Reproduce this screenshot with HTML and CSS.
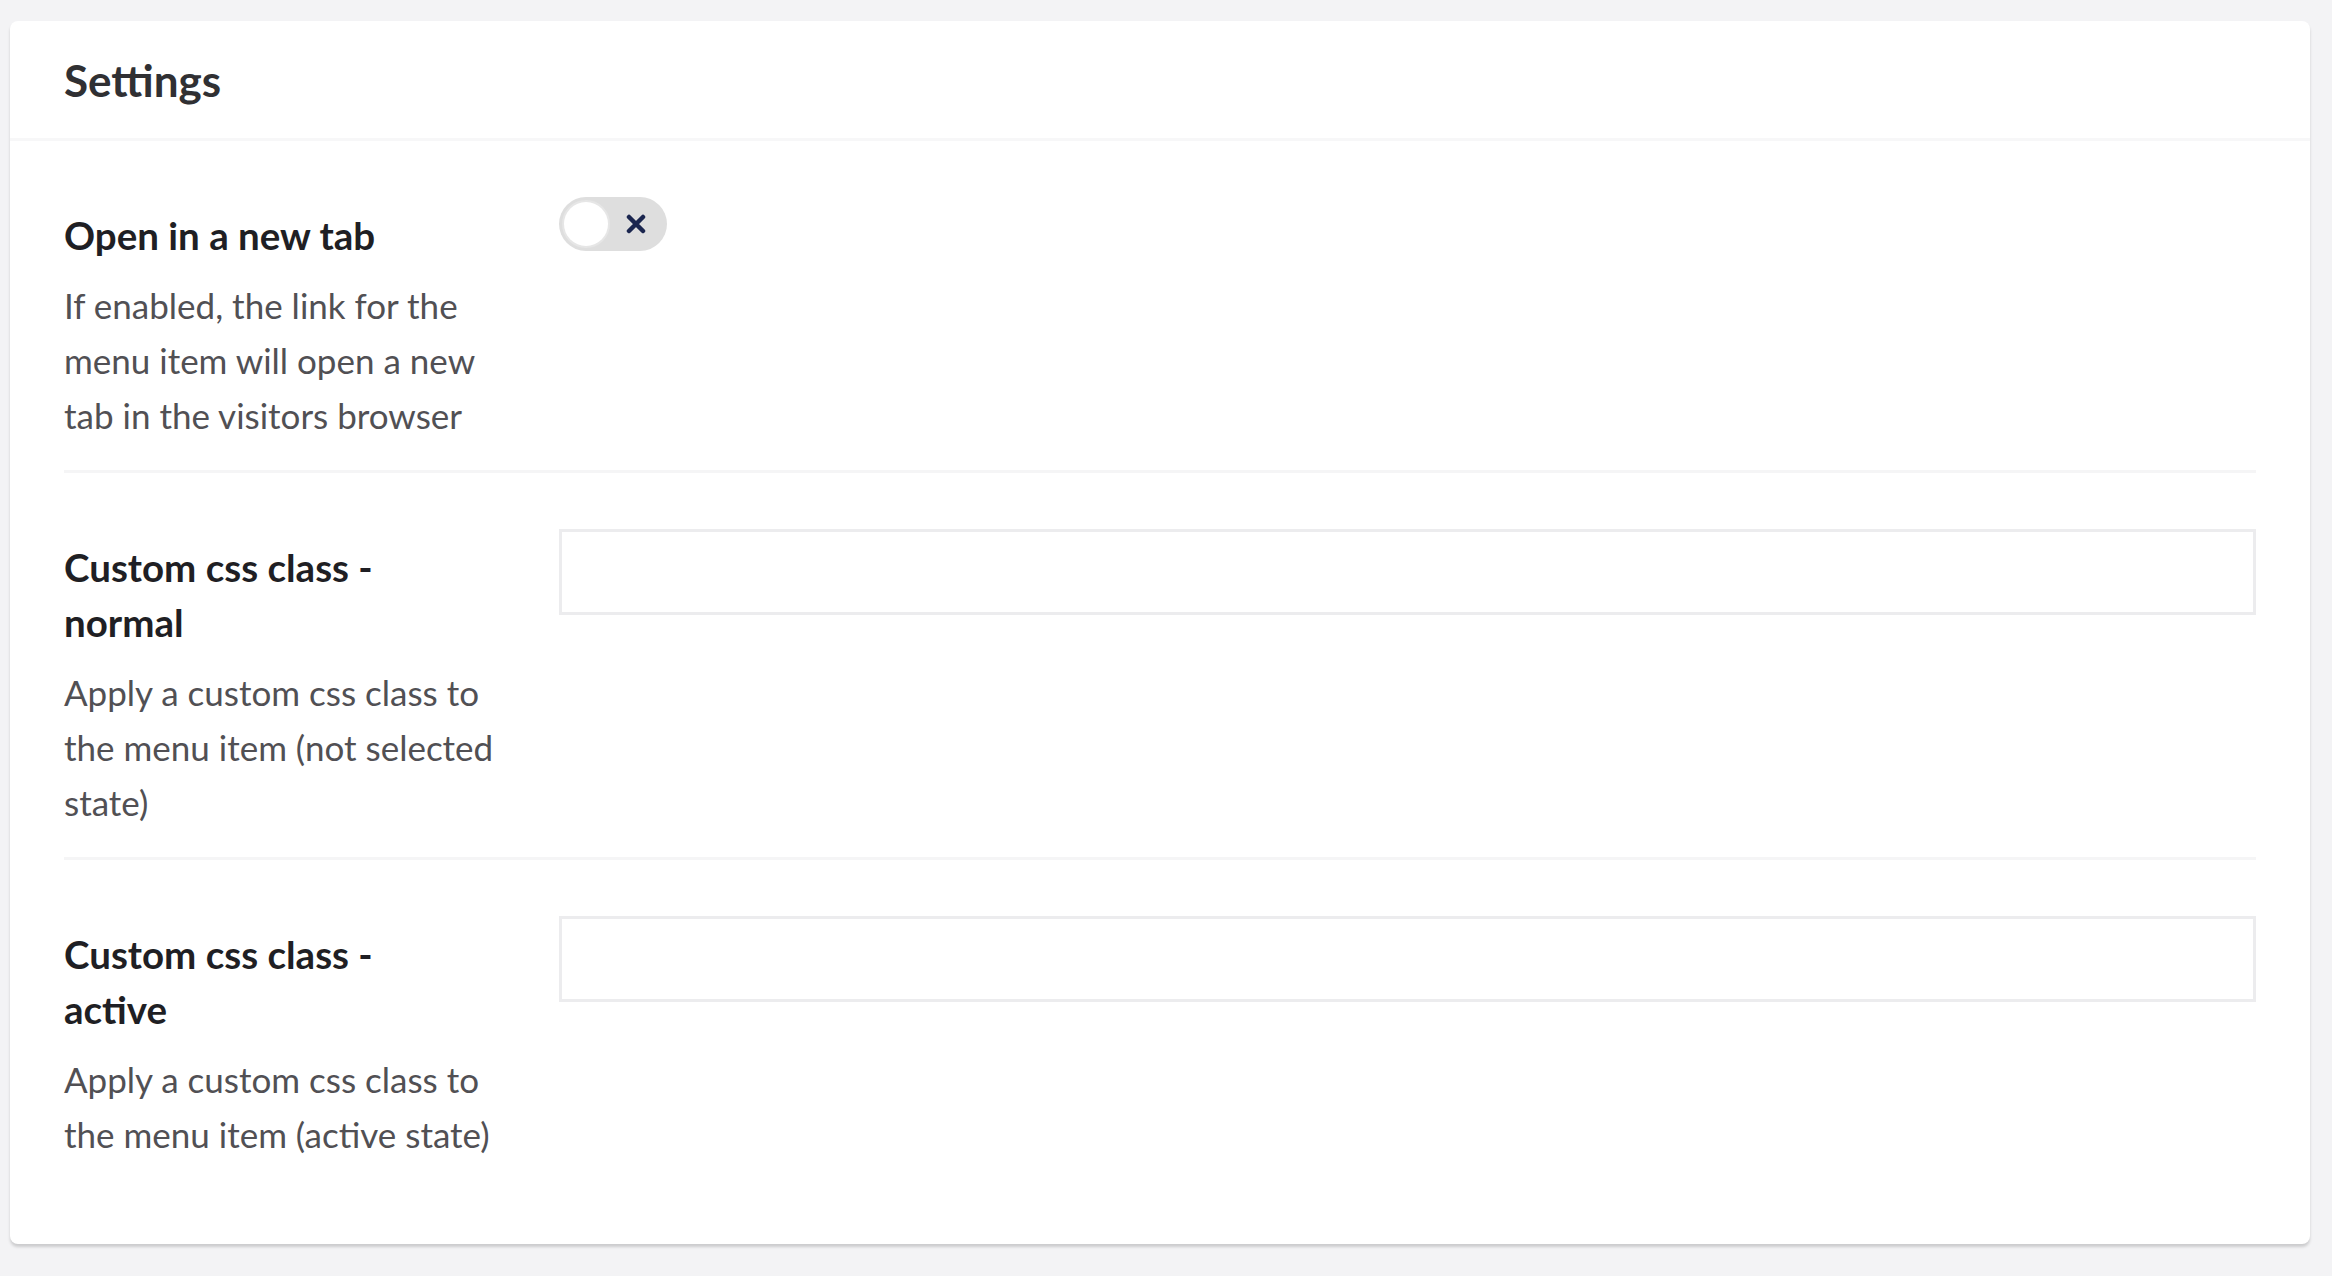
FILE: index.html
```html
<!DOCTYPE html>
<html lang="en">
<head>
    <meta charset="UTF-8">
    <meta name="viewport" content="width=device-width, initial-scale=1.0">
    <title>Settings</title>
    <link rel="stylesheet" href="styles.css">
</head>
<body>
    <div class="panel">
        <div class="panel-header">
            <h2 class="panel-title">Settings</h2>
        </div>
        <div class="panel-body">
            <div class="property">
                <div class="property-label">
                    <label class="control-label">Open in a new tab</label>
                    <p class="control-description">If enabled, the link for the menu item will open a new tab in the visitors browser</p>
                </div>
                <div class="property-editor">
                    <button class="toggle" type="button">
                        <span class="toggle-knob"></span>
                        <svg class="toggle-icon" viewBox="0 0 20 20" width="20" height="20">
                            <path d="M3 3 L17 17 M17 3 L3 17" stroke="#1b264f" stroke-width="4.5" stroke-linecap="round"/>
                        </svg>
                    </button>
                </div>
            </div>
            <div class="property">
                <div class="property-label">
                    <label class="control-label">Custom css class - normal</label>
                    <p class="control-description">Apply a custom css class to the menu item (not selected state)</p>
                </div>
                <div class="property-editor">
                    <input class="text-input" type="text">
                </div>
            </div>
            <div class="property">
                <div class="property-label">
                    <label class="control-label">Custom css class - active</label>
                    <p class="control-description">Apply a custom css class to the menu item (active state)</p>
                </div>
                <div class="property-editor">
                    <input class="text-input" type="text">
                </div>
            </div>
        </div>
    </div>
</body>
</html>
```

FILE: styles.css
```css
body {
    margin: 0;
    padding: 21px 22px 30px 10px;
    background-color: #f3f3f5;
    font-family: Lato, "Open Sans", sans-serif;
}

.panel {
    background-color: #fff;
    border-radius: 8px;
    box-shadow: 0 3px 3px rgba(0, 0, 0, 0.16);
}

.panel-header {
    height: 117px;
    display: flex;
    align-items: center;
    padding: 0 54px;
    border-bottom: 3px solid #f7f7f8;
}

.panel-title {
    margin: 0;
    font-size: 44px;
    font-weight: 700;
    color: #303033;
}

.panel-body {
    padding: 0 54px 55px;
}

.property {
    display: flex;
    padding: 56px 0 27px;
    border-bottom: 3px solid #f5f5f6;
}

.property:last-child {
    border-bottom: none;
}

.property-label {
    width: 440px;
    margin-right: 55px;
    flex-shrink: 0;
    padding-top: 11px;
}

.control-label {
    display: block;
    max-width: 400px;
    font-size: 38.5px;
    line-height: 55px;
    font-weight: 700;
    color: #1f1f24;
}

.control-description {
    margin: 15px 0 0;
    font-size: 35px;
    line-height: 55px;
    color: #515054;
}

.property-editor {
    flex: 1;
}

/* toggle switch, off state */
.toggle {
    display: flex;
    align-items: center;
    width: 108px;
    height: 54px;
    padding: 0 5px;
    border: none;
    border-radius: 27px;
    background-color: #dedede;
    cursor: pointer;
}

.toggle-knob {
    width: 44px;
    height: 44px;
    border-radius: 50%;
    background-color: #fff;
    box-shadow: 0 0 0 2px #e6e6e6;
}

.toggle-icon {
    margin-left: 18px;
}

.text-input {
    display: block;
    box-sizing: border-box;
    width: 100%;
    height: 86px;
    margin: 0;
    border: 3px solid #ececee;
    background-color: #fff;
    font-family: inherit;
    font-size: 35px;
}
```
